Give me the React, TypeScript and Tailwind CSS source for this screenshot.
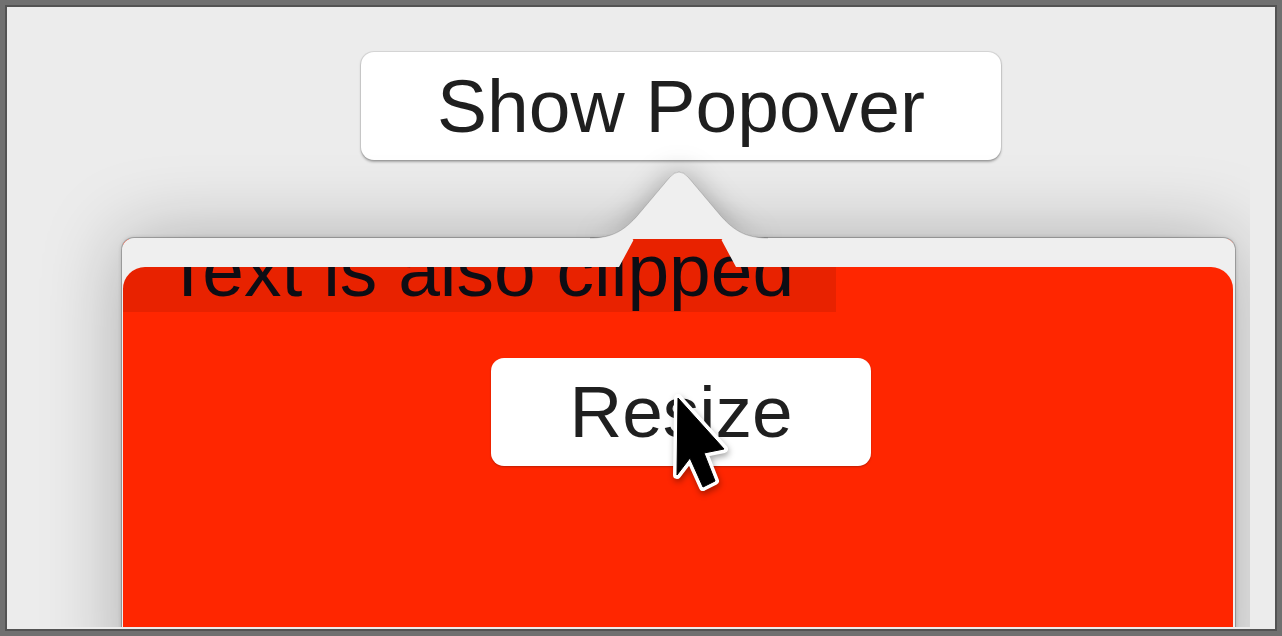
import React from "react";

const ARROW =
  "M0,70 C22,70 34,63 48,47 L80,9 Q89,-1 98,9 L130,47 C144,63 156,70 178,70";

function Cursor() {
  const d = "M8,8 L7,85 L20,68 L33,97 L45,91 L34,63 L54,59 Z";
  return (
    <svg
      className="absolute left-[670px] top-[390px] w-[64px] h-[106px] [filter:drop-shadow(1px_3px_3px_rgba(0,0,0,0.35))]"
      viewBox="0 0 64 106"
    >
      <path d={d} fill="#fff" stroke="#fff" strokeWidth="8" strokeLinejoin="round" />
      <path d={d} fill="#000" stroke="#000" strokeWidth="1" strokeLinejoin="round" />
    </svg>
  );
}

export default function App() {
  return (
    <div
      className="relative w-[1282px] h-[636px] overflow-hidden bg-[#707070] p-[5px]"
      style={{ fontFamily: '"Liberation Sans", Arial, sans-serif' }}
    >
      <div className="w-full h-full border-2 border-[#535353] bg-[#ececec]">
        <div className="relative w-[1243px] h-[620px] overflow-hidden flex flex-col items-start">
          <button className="ml-[354px] mt-[45px] w-[640px] h-[108px] shrink-0 rounded-[13px] bg-white text-[75px] leading-[108px] text-[#1f1f1f] shadow-[0_0_0_1px_rgba(0,0,0,0.07),0_1.5px_2.5px_rgba(0,0,0,0.3)]">
            Show Popover
          </button>

          <div className="relative ml-[115px] mt-[78px] w-[1113px] h-[460px] shrink-0">
            {/* arrow shadow (behind) */}
            <svg
              className="absolute left-[468px] top-[-70px] w-[178px] h-[71px] overflow-visible [filter:drop-shadow(0_0_14px_rgba(0,0,0,0.3))]"
              viewBox="0 0 178 71"
            >
              <path d={ARROW + " V71 H0 Z"} fill="#efefef" />
            </svg>

            {/* frame */}
            <div className="absolute inset-0 overflow-hidden rounded-t-[12px] bg-[#efefef] pl-[1px] pr-[2px] pt-[1px] shadow-[0_0_0_1px_rgba(0,0,0,0.2),0_0_4px_rgba(0,0,0,0.22),0_0_80px_rgba(0,0,0,0.28)]">
              <div className="relative h-full bg-[#ff2600] overflow-hidden">
                <div className="w-[713px] h-[73px] overflow-hidden bg-[#e82200] text-center text-[75px] leading-[62px] text-[#0d0d14] whitespace-nowrap">
                  Text is also clipped
                </div>
                <button className="block ml-[368px] mt-[46px] w-[380px] h-[108px] rounded-[13px] bg-white text-[73px] leading-[108px] text-[#1f1f1f] shadow-[0_1px_2px_rgba(0,0,0,0.25)]">
                  Resize
                </button>
                <svg
                  className="absolute left-0 top-0 w-[1110px] h-[50px]"
                  viewBox="0 0 1110 50"
                >
                  <path
                    d="M0,0 H509 Q511,0 510,2 L496,28 H22 A22 22 0 0 0 0 50 Z"
                    fill="#efefef"
                  />
                  <path
                    d="M600,0 H1110 V50 A22 22 0 0 0 1088 28 H613 L599,2 Q598,0 600,0 Z"
                    fill="#efefef"
                  />
                </svg>
              </div>
            </div>

            {/* arrow top */}
            <svg
              className="absolute left-[468px] top-[-70px] w-[178px] h-[71px] overflow-visible"
              viewBox="0 0 178 71"
            >
              <path d={ARROW + " V70.6 H0 Z"} fill="#efefef" />
              <path d={ARROW} fill="none" stroke="rgba(0,0,0,0.18)" strokeWidth="1" />
            </svg>
          </div>
        </div>
      </div>
      <Cursor />
    </div>
  );
}
